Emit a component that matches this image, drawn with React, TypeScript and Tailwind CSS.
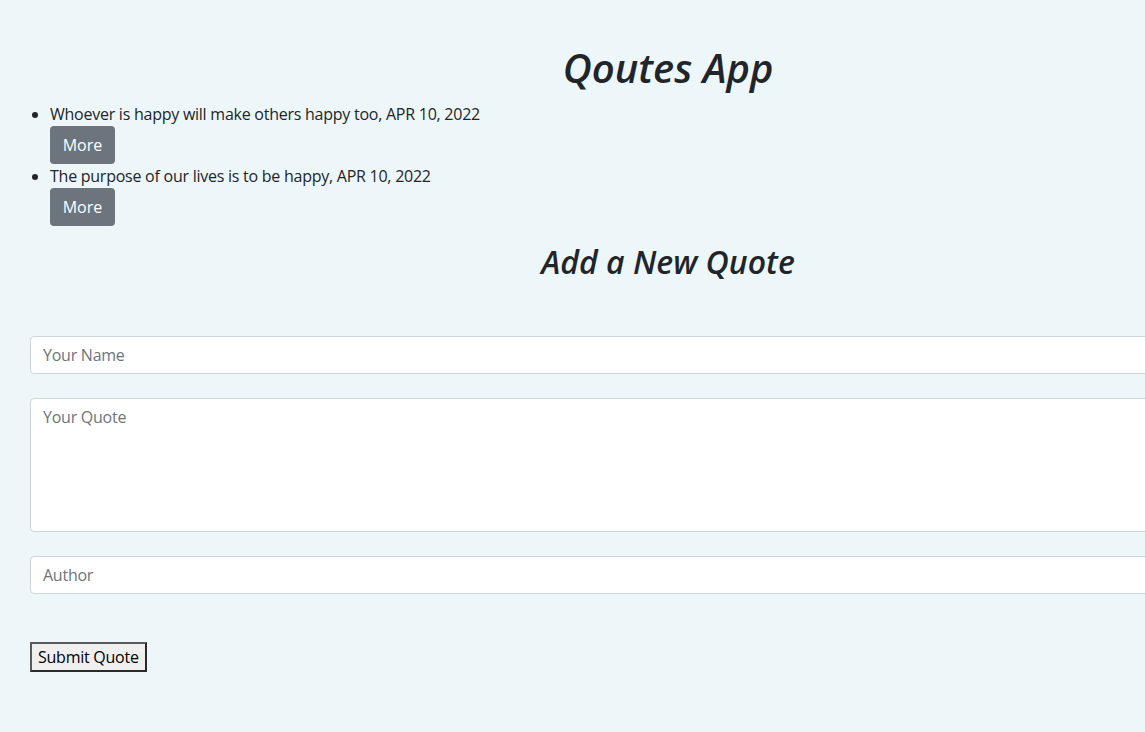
import * as React from 'react'

type Quote = {
  id: number
  text: string
  date: string
}

const QUOTES: Quote[] = [
  { id: 1, text: 'Whoever is happy will make others happy too', date: 'APR 10, 2022' },
  { id: 2, text: 'The purpose of our lives is to be happy', date: 'APR 10, 2022' },
]

const inputClass =
  'block w-full rounded-[4px] border border-[#ced4da] bg-white px-3 py-1.5 text-base leading-6 text-[#212529] outline-none placeholder:text-[#6c757d]'

export default function App() {
  const [name, setName] = React.useState('')
  const [quote, setQuote] = React.useState('')
  const [author, setAuthor] = React.useState('')

  return (
    <div className="h-[732px] w-full overflow-hidden bg-[#edf6f9] font-['Open_Sans',sans-serif] text-base leading-6 tracking-[-0.25px] text-[#212529]">
      <div className="ml-[30px] w-[1276px]">
        <h1 className="pt-[44px] text-center text-[40px] font-semibold italic leading-[48px] tracking-normal">
          Qoutes App
        </h1>

        <ul className="mt-[10px] list-disc pl-[20px]">
          {QUOTES.map((q) => (
            <li key={q.id}>
              <span>
                {q.text}, {q.date}
              </span>
              <div>
                <button
                  type="button"
                  className="w-[65px] rounded-[4px] bg-[#6c757d] py-1.5 text-center text-base leading-[26px] tracking-normal text-white"
                >
                  More
                </button>
              </div>
            </li>
          ))}
        </ul>

        <h2 className="mt-[17px] text-center text-[32px] font-semibold italic leading-[38px] tracking-normal">
          Add a New Quote
        </h2>

        <form
          className="mt-[55px] flex flex-col"
          onSubmit={(e) => e.preventDefault()}
        >
          <input
            className={inputClass + ' h-[38px]'}
            placeholder="Your Name"
            value={name}
            onChange={(e) => setName(e.target.value)}
          />
          <textarea
            className={inputClass + ' mt-6 h-[134px] resize-none'}
            placeholder="Your Quote"
            value={quote}
            onChange={(e) => setQuote(e.target.value)}
          />
          <input
            className={inputClass + ' mt-6 h-[38px]'}
            placeholder="Author"
            value={author}
            onChange={(e) => setAuthor(e.target.value)}
          />
          <div className="mt-12">
            <button
              type="submit"
              className="h-[30px] border-2 border-t-[#5a5a5a] border-l-[#5a5a5a] border-r-[#2a2a2a] border-b-[#2a2a2a] bg-[#efefef] px-1.5 text-base leading-6 text-black"
            >
              Submit Quote
            </button>
          </div>
        </form>
      </div>
    </div>
  )
}
